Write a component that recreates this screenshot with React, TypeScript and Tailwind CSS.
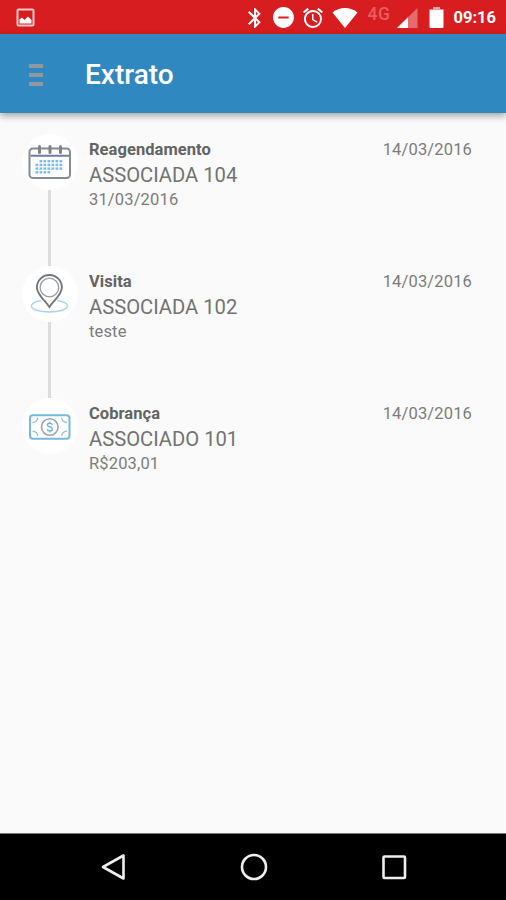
import type { ReactNode } from 'react';
import { MdAlarm, MdBluetooth, MdDoNotDisturbOn } from 'react-icons/md';

interface Entry {
    title: string;
    name: string;
    detail: string;
    date: string;
    icon: ReactNode;
}

// x positions of the day marks, one list per week
const weeks = [
    [12, 16, 20, 24, 28, 32],
    [8, 12, 16, 20, 24, 28, 32],
    [8, 12, 16, 20, 24, 28, 32],
    [8, 12, 16, 20],
];

function CalendarIcon() {
    return (
        <svg width="44" height="36" viewBox="0.5 0 44 36" fill="none">
            <rect x="2" y="4.5" width="40.5" height="29.5" rx="3.5" fill="#fff" stroke="#868b91" strokeWidth="2" />
            <path d="M3 11.8h38.5" stroke="#6a8099" strokeWidth="2" />
            {[12, 22.5, 33].map((x) => (
                <path key={x} d={`M${x} 2.5v6`} stroke="#808388" strokeWidth="3" strokeLinecap="round" />
            ))}
            {weeks.map((week, i) =>
                week.map((x) => (
                    <rect key={`${i}-${x}`} x={x} y={16 + i * 3.7} width="2.7" height="2.4" fill="#7abce6" />
                ))
            )}
        </svg>
    );
}

function PinIcon() {
    return (
        <svg width="44" height="44" viewBox="0.6 -1 44 44" fill="none">
            <path d="M14 27.5C7.5 28.5 4 30.5 4 33c0 3.5 8 6 18 6s18-2.5 18-6c0-2.5-3.5-4.5-10-5.5" stroke="#a9d3ef" strokeWidth="1.5" />
            <path d="M22 34C18 28 9.500 21.5 9.5 14.5a12.5 12.5 0 0 1 25 0C34.5 21.5 26 28 22 34Z" fill="#fff" stroke="#74777b" strokeWidth="1.9" />
            <circle cx="22" cy="14.5" r="9.3" stroke="#999ca0" strokeWidth="1.3" />
        </svg>
    );
}

function MoneyIcon() {
    return (
        <svg width="44" height="28" viewBox="0 -1.2 44 28" fill="none">
            <rect x="2" y="2" width="39.5" height="23.5" rx="3" stroke="#78b7e2" strokeWidth="2" />
            <path d="M10 4.5a6 6 0 0 1-5.500 5M33.5 4.5a6 6 0 0 0 5.5 5M10 23a6 6 0 0 0-5.5-5M33.5 23a6 6 0 0 1 5.5-5" stroke="#8fc3e8" strokeWidth="1.2" />
            <circle cx="21.8" cy="13.8" r="8.3" fill="#fff" stroke="#a0a3a7" strokeWidth="1.6" />
            <path d="M24.3 11.5c-.4-1-1.3-1.5-2.5-1.5-1.4 0-2.4.7-2.4 1.9 0 2.6 5 1.2 5 3.9 0 1.2-1.1 1.9-2.6 1.9-1.3 0-2.3-.6-2.6-1.7M21.8 8.5v1.5M21.8 17.7v1.5" stroke="#6fb1df" strokeWidth="1.4" />
        </svg>
    );
}

const entries: Entry[] = [
    { title: 'Reagendamento', name: 'ASSOCIADA 104', detail: '31/03/2016', date: '14/03/2016', icon: <CalendarIcon /> },
    { title: 'Visita', name: 'ASSOCIADA 102', detail: 'teste', date: '14/03/2016', icon: <PinIcon /> },
    { title: 'Cobrança', name: 'ASSOCIADO 101', detail: 'R$203,01', date: '14/03/2016', icon: <MoneyIcon /> },
];

function StatusBar() {
    return (
        <div className="flex h-[34px] shrink-0 items-center bg-[#d71d1f] pl-4 pr-[10px] pt-px text-white">
            <svg width="19" height="19" viewBox="0 0 19 19" fill="none">
                <rect x="1.5" y="1.5" width="16" height="16" rx="1" stroke="#fbc9c9" strokeWidth="2" />
                <path d="M3.5 15.5v-4l2.5-2 2.5 2.5 3.5-3.5 3.5 3.5v3.5z" fill="#fff" />
            </svg>
            <div className="ml-auto flex items-center">
                <MdBluetooth className="h-6 w-6" />
                <MdDoNotDisturbOn className="ml-1 h-[25px] w-[25px]" />
                <MdAlarm className="ml-[5px] h-6 w-6" />
                <svg className="ml-[7px]" width="26" height="20" viewBox="0 0 26 20" fill="#fff">
                    <path d="M13 20 .5 4.5C4 1.6 8.3 0 13 0s9 1.600 12.5 4.5z" />
                </svg>
                <span className="-mt-2 ml-[9px] w-6 text-[17.5px] font-medium leading-5 tracking-[0.5px] text-[#e85e5f]">4G</span>
                <svg className="ml-[6px]" width="21" height="20" viewBox="0 0 21 20">
                    <path d="M0 20 20.5 0v20z" fill="#e76b6c" />
                    <path d="M0 20 11 9.3V20z" fill="#fff" />
                </svg>
                <svg className="ml-[11px]" width="15" height="21" viewBox="0 0 15 21" fill="#fff">
                    <path d="M.5 2.5h14V20a1 1 0 0 1-1 1h-12a1 1 0 0 1-1-1z" />
                    <path d="M4 0h7v2.5H4z" fill="#f3a5a5" />
                </svg>
                <span className="ml-[9px] pt-px text-[16.5px] font-bold leading-5">09:16</span>
            </div>
        </div>
    );
}

function AppBar() {
    return (
        <header className="z-10 flex h-[79px] shrink-0 items-center bg-[#3088c1] pb-px pl-[29px] shadow-[0_3px_7px_rgba(0,0,0,0.35)]">
            <button className="mt-[3px] flex w-[14px] flex-col gap-[5px]" aria-label="Menu">
                <span className="h-1 bg-[#8f989f]" />
                <span className="h-1 bg-[#8f989f]" />
                <span className="h-1 bg-[#8f989f]" />
            </button>
            <h1 className="ml-[42px] mt-1 text-[28px] font-medium leading-8 text-white">Extrato</h1>
        </header>
    );
}

function NavBar() {
    return (
        <nav className="flex h-[67px] shrink-0 items-center justify-between border-t border-[#777] bg-black px-[99px]">
            <svg width="28" height="30" viewBox="0 0 28 30" fill="none">
                <path d="M24.5 3.5v23L4 15z" stroke="#eee" strokeWidth="2.6" strokeLinejoin="round" />
            </svg>
            <svg width="30" height="28" viewBox="0 0 30 28" fill="none">
                <circle cx="14" cy="14" r="12" stroke="#eee" strokeWidth="2.6" />
            </svg>
            <svg width="25" height="25" viewBox="0 0 25 25" fill="none">
                <rect x="1.5" y="1.5" width="21.5" height="21.5" rx="1" stroke="#eee" strokeWidth="2.6" />
            </svg>
        </nav>
    );
}

export default function App() {
    return (
        <div className="flex h-[900px] w-[506px] flex-col overflow-hidden bg-[#fafafa] font-['Roboto',sans-serif]">
            <StatusBar />
            <AppBar />
            <main className="flex-1 pl-[21px] pr-[34px] pt-[21px]">
                {entries.map((entry, i) => (
                    <div key={entry.title} className="flex h-[132px]">
                        <div className="flex w-[57px] flex-col items-center">
                            <div className="flex h-14 w-14 shrink-0 items-center justify-center rounded-full bg-white">
                                {entry.icon}
                            </div>
                            {i < entries.length - 1 && <div className="w-[3px] flex-1 bg-[#dcdcdc]" />}
                        </div>
                        <div className="ml-[11px] mt-[3px] flex-1 text-[#7c7c7c]">
                            <div className="flex justify-between text-[16.5px] leading-[25px]">
                                <h2 className="font-bold tracking-[0.05px] text-[#636363]">{entry.title}</h2>
                                <span className="tracking-[0.15px]">{entry.date}</span>
                            </div>
                            <p className="pt-px text-[20.2px] leading-6 text-[#727272]">{entry.name}</p>
                            <p className="text-[16.5px] leading-[25px] tracking-[0.15px]">{entry.detail}</p>
                        </div>
                    </div>
                ))}
            </main>
            <NavBar />
        </div>
    );
}
